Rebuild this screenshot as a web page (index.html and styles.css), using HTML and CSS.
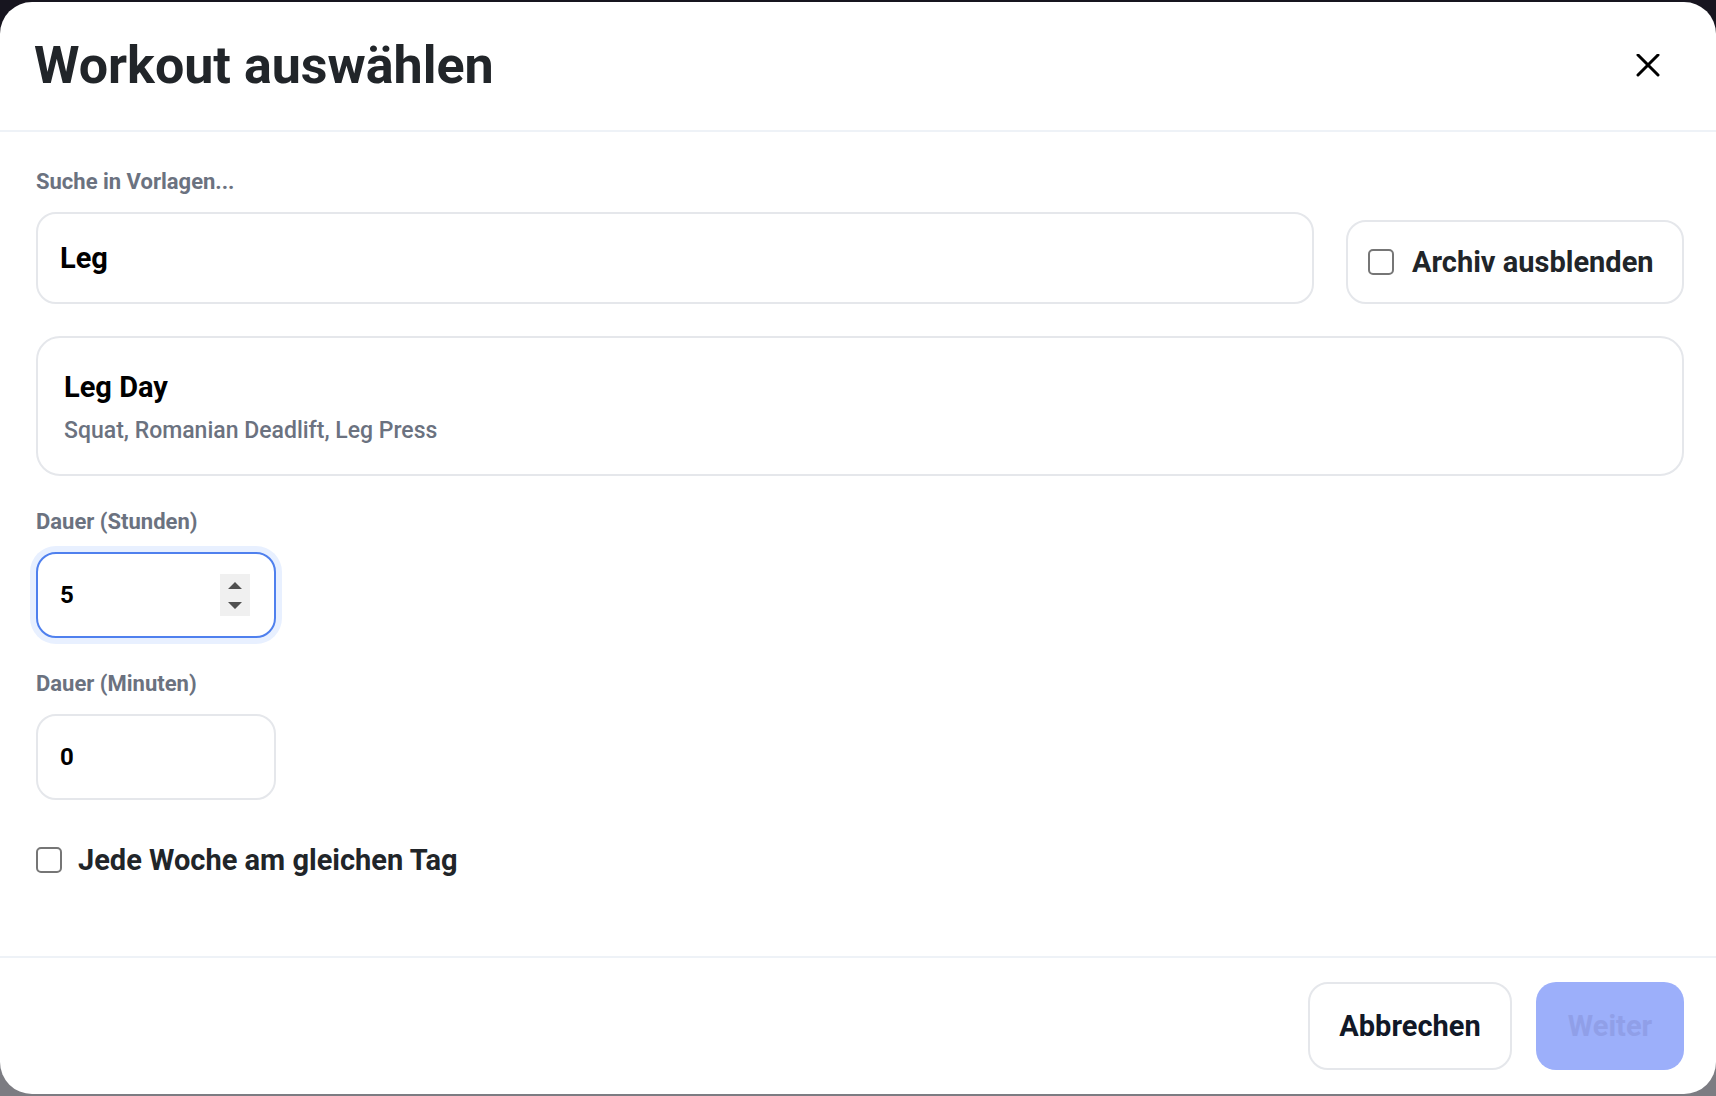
FILE: index.html
```html
<!DOCTYPE html>
<html lang="de">
<head>
<meta charset="utf-8">
<meta name="viewport" content="width=device-width, initial-scale=1">
<title>Workout auswählen</title>
<link rel="stylesheet" href="styles.css">
</head>
<body>
<form class="modal" role="dialog" aria-labelledby="title">
  <header class="modal-header">
    <h1 class="title" id="title">Workout auswählen</h1>
    <button class="close" type="button" aria-label="Schließen">
      <svg width="24" height="24" viewBox="0 0 24 24" fill="none" stroke="currentColor" stroke-width="3" stroke-linecap="round"><path d="M2 1l20 20M22 1L2 21"/></svg>
    </button>
  </header>
  <main class="modal-body">
    <div class="search-row">
      <div class="search">
        <label class="label" for="search">Suche in Vorlagen...</label>
        <input class="input input-search" id="search" type="text" value="Leg">
      </div>
      <label class="archive"><input class="check" type="checkbox"><span>Archiv ausblenden</span></label>
    </div>
    <button class="template" type="button">
      <span class="template-name">Leg Day</span>
      <span class="template-exercises">Squat, Romanian Deadlift, Leg Press</span>
    </button>
    <div class="duration">
      <label class="label" for="hours">Dauer (Stunden)</label>
      <div class="number">
        <input class="input input-number active" id="hours" type="number" value="5" min="0">
        <span class="stepper" aria-hidden="true">
          <svg width="30" height="42" viewBox="0 0 30 42"><path fill="#505050" d="M15 8l7 7H8zM8 28h14l-7 7z"/></svg>
        </span>
      </div>
    </div>
    <div class="duration">
      <label class="label" for="minutes">Dauer (Minuten)</label>
      <div class="number">
        <input class="input input-number" id="minutes" type="number" value="0" min="0">
      </div>
    </div>
    <label class="weekly"><input class="check" type="checkbox"><span>Jede Woche am gleichen Tag</span></label>
  </main>
  <footer class="modal-footer">
    <button class="button cancel" type="button">Abbrechen</button>
    <button class="button next" type="submit" disabled>Weiter</button>
  </footer>
</form>
</body>
</html>
```
FILE: styles.css
```css
* { box-sizing: border-box; }

body {
  margin: 0;
  min-height: 100vh;
  padding: 2px 0;
  display: flex;
  background: linear-gradient(#17151f 0, #17151f 50%, #7c7c82 50%);
  font-family: Roboto, "Liberation Sans", sans-serif;
  font-weight: 700;
  color: #212529;
}

button, input { font: inherit; }

.modal {
  flex: 1;
  display: flex;
  flex-direction: column;
  background: #fff;
  border-radius: 32px;
}

.modal-header {
  display: flex;
  align-items: center;
  justify-content: space-between;
  padding: 32px 52px 32px 34px;
  border-bottom: 2px solid #eef2f7;
}

.title {
  margin: 0;
  font-size: 52px;
  line-height: 64px;
}

.close {
  display: flex;
  padding: 4px;
  border: 0;
  background: none;
  color: #000;
}

.modal-body {
  flex: 1;
  display: flex;
  flex-direction: column;
  padding: 34px 32px 32px 36px;
}

.search-row {
  display: flex;
  align-items: flex-end;
  gap: 32px;
  margin-bottom: 32px;
}

.search { flex: 1; }

.label {
  display: block;
  margin-bottom: 14px;
  color: #6b7280;
  font-size: 22px;
  line-height: 32px;
}

.input, .archive, .template, .cancel {
  border: 2px solid #e5e7eb;
  border-radius: 20px;
  background: #fff;
}

.input {
  display: block;
  width: 100%;
  padding: 0 22px;
  color: #000;
  outline: 0;
}

.input-search { height: 92px; font-size: 29px; }

.archive {
  display: flex;
  align-items: center;
  gap: 18px;
  width: 338px;
  height: 84px;
  padding: 0 20px;
  font-size: 29px;
  white-space: nowrap;
}

.check {
  appearance: none;
  flex: none;
  width: 26px;
  height: 26px;
  margin: 0;
  border: 2px solid #767676;
  border-radius: 5px;
  background: #fff;
}

.template {
  display: flex;
  flex-direction: column;
  justify-content: center;
  gap: 8px;
  height: 140px;
  margin-bottom: 30px;
  padding: 2px 26px 0;
  border-radius: 24px;
  text-align: left;
}

.template-name { color: #000; font-size: 29px; line-height: 40px; }
.template-exercises { color: #6b7280; font-size: 23px; font-weight: 500; line-height: 32px; }

.duration { margin-bottom: 30px; }

.number { position: relative; width: 240px; }

.input-number { height: 86px; font-size: 24px; appearance: textfield; }
.input-number::-webkit-inner-spin-button { display: none; }

.active {
  border-color: #4f80ee;
  box-shadow: 0 0 0 6px #e8f0ff;
}

.stepper {
  position: absolute;
  top: 22px;
  right: 26px;
  display: flex;
  background: #f0f0f0;
}

.weekly {
  display: flex;
  align-items: center;
  align-self: flex-start;
  gap: 16px;
  margin-top: 10px;
  font-size: 29px;
  line-height: 40px;
}

.modal-footer {
  display: flex;
  justify-content: flex-end;
  gap: 24px;
  padding: 24px 32px;
  border-top: 2px solid #eef2f7;
}

.button {
  height: 88px;
  border-radius: 20px;
  font-size: 29px;
}

.cancel { width: 204px; color: #111827; }

.next {
  width: 148px;
  border: 0;
  background: #9caffa;
  color: #909fe8;
}
```
